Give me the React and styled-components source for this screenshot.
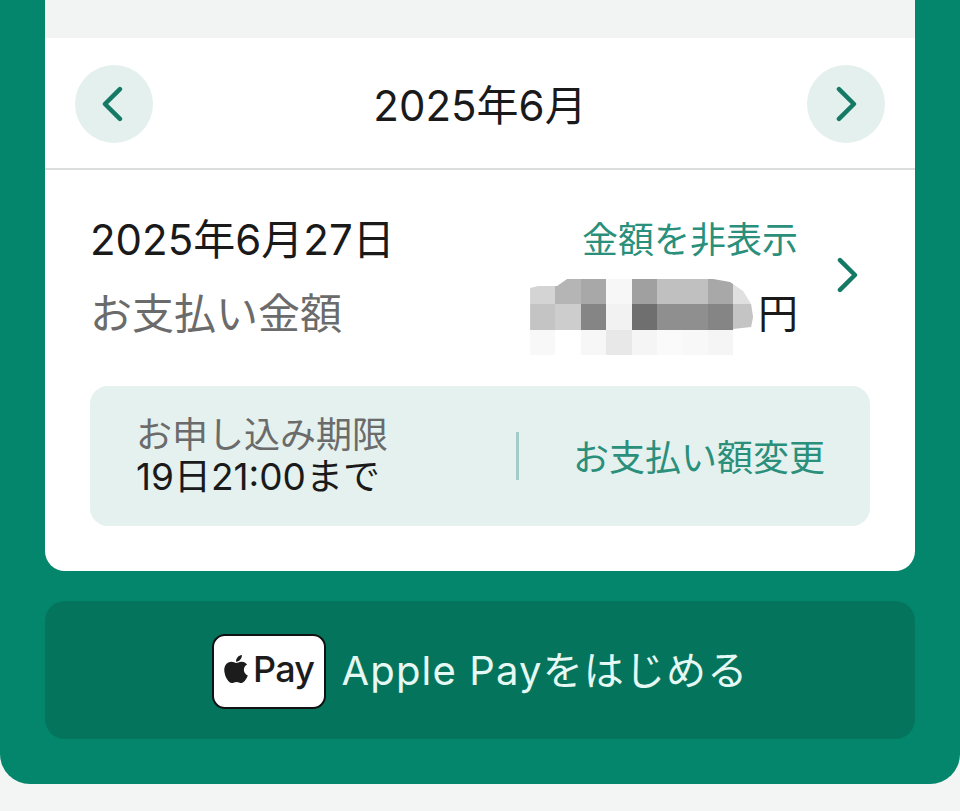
import React from 'react';
import styled, { createGlobalStyle } from 'styled-components';
import { FaApple } from 'react-icons/fa';

const GlobalStyle = createGlobalStyle`
  html, body {
    margin: 0;
    height: 811px;
    overflow: hidden;
    background: #f3f5f4;
  }
  body {
    font-family: "Inter", "Noto Sans CJK JP", sans-serif;
  }
`;

const Panel = styled.div`
  box-sizing: border-box;
  height: 784px;
  padding: 0 45px;
  display: flex;
  flex-direction: column;
  gap: 30px;
  background: #03866b;
  border-radius: 0 0 30px 30px;
`;

const Card = styled.div`
  height: 571px;
  display: flex;
  flex-direction: column;
  background: #fff;
  border-radius: 0 0 20px 20px;
  overflow: hidden;
`;

const TopStrip = styled.div`
  height: 38px;
  flex: none;
  background: #f1f4f3;
`;

const MonthBar = styled.div`
  box-sizing: border-box;
  height: 132px;
  flex: none;
  padding: 2px 30px 0;
  display: flex;
  align-items: center;
  justify-content: space-between;
  border-bottom: 2px solid #dcdddd;
`;

const MonthLabel = styled.div`
  margin-bottom: 4px;
  font-size: 42px;
  color: #1a1a1a;
`;

const RoundButton = styled.div`
  width: 78px;
  height: 78px;
  display: flex;
  align-items: center;
  justify-content: center;
  border-radius: 50%;
  background: #e4f0ee;
`;

const DetailRow = styled.div`
  padding: 44px 55px 0 45px;
  display: flex;
  align-items: center;
  gap: 36px;
`;

const DetailChevron = styled.div`
  display: flex;
  margin-bottom: 4px;
`;

const DetailBody = styled.div`
  flex: 1;
  display: grid;
  grid-template-columns: 1fr auto;
  row-gap: 22px;
`;

const DateText = styled.div`
  font-size: 42px;
  line-height: 52px;
  color: #1a1a1a;
`;

const HideLink = styled.div`
  font-size: 36px;
  line-height: 52px;
  text-align: right;
  color: #2a8f7b;
`;

const AmountLabel = styled.div`
  font-size: 42px;
  line-height: 52px;
  color: #6b6b6b;
`;

const AmountValue = styled.div`
  display: flex;
  align-items: center;
  font-size: 40px;
  line-height: 52px;
  color: #1a1a1a;
`;

const Mosaic = styled.div`
  width: 223px;
  height: 76px;
  margin: -9px 5px -15px 0;
  display: grid;
  grid-template-columns: repeat(8, 25.4px) 20px;
  grid-template-rows: repeat(3, 25.3px);
  clip-path: polygon(0 9px, 8px 7px, 27px 7px, 37px 0, 183px 0, 200px 3px, 213px 12px, 221px 25px, 223px 38px, 221px 48px, 203px 50px, 203px 76px, 0 76px);
`;

const MosaicCell = styled.div`
  background: ${(p) => p.$shade};
`;

const InfoBox = styled.div`
  box-sizing: border-box;
  height: 140px;
  margin: 46px 45px 0;
  padding: 0 45px 0 46px;
  display: flex;
  align-items: center;
  background: #e4f1ee;
  border-radius: 18px;
`;

const Deadline = styled.div`
  width: 380px;
  flex: none;
`;

const DeadlineLabel = styled.div`
  font-size: 36px;
  line-height: 42px;
  color: #6b6b6b;
`;

const DeadlineValue = styled.div`
  font-size: 37px;
  line-height: 42px;
  color: #1a1a1a;
`;

const Separator = styled.div`
  width: 3px;
  height: 48px;
  flex: none;
  background: #a3ccc8;
`;

const ChangeLink = styled.div`
  flex: 1;
  padding-bottom: 3px;
  font-size: 36px;
  text-align: right;
  color: #2a8f7b;
`;

const ApplePayButton = styled.div`
  height: 138px;
  flex: none;
  display: flex;
  align-items: center;
  justify-content: center;
  gap: 16px;
  background: #04755c;
  border-radius: 20px;
`;

const PayBadge = styled.div`
  box-sizing: border-box;
  width: 114px;
  height: 75px;
  margin-top: 2px;
  display: flex;
  align-items: center;
  justify-content: center;
  gap: 1px;
  padding: 0 3px 4px 0;
  background: #fff;
  border: 2px solid #111;
  border-radius: 13px;
  color: #1c1c1c;
  font-size: 36px;
  font-weight: 500;
  letter-spacing: -0.8px;
`;

const ApplePayText = styled.div`
  margin: 0 0 4px 0;
  font-size: 40px;
  letter-spacing: 1.15px;
  color: #e6f8f3;
`;

const MOSAIC_SHADES = [
  '#d4d4d4', '#b5b5b5', '#a8a8a8', '#f7f7f7', '#a0a0a0', '#c0c0c0', '#c0c0c0', '#a8a8a8', '#e0e0e0',
  '#c4c4c4', '#cdcdcd', '#858585', '#f2f2f2', '#6f6f6f', '#8f8f8f', '#8f8f8f', '#858585', '#c4c4c4',
  '#f8f8f8', '#ffffff', '#f7f7f7', '#e8e8e8', '#f5f5f5', '#fafafa', '#f8f8f8', '#f5f5f5', '#ffffff',
];

function Chevron({ left, size = 36 }) {
  return (
    <svg width={size * 0.72} height={size} viewBox="0 0 26 36" fill="none">
      <path
        d={left ? 'M19 3 L4 18 L19 33' : 'M6 3 L21 18 L6 33'}
        stroke="#147a65"
        strokeWidth="4.5"
        strokeLinecap="round"
        strokeLinejoin="round"
      />
    </svg>
  );
}

export default function App() {
  return (
    <>
      <GlobalStyle />
      <Panel>
        <Card>
          <TopStrip />
          <MonthBar>
            <RoundButton>
              <Chevron left />
            </RoundButton>
            <MonthLabel>2025年6月</MonthLabel>
            <RoundButton>
              <Chevron />
            </RoundButton>
          </MonthBar>
          <DetailRow>
            <DetailBody>
              <DateText>2025年6月27日</DateText>
              <HideLink>金額を非表示</HideLink>
              <AmountLabel>お支払い金額</AmountLabel>
              <AmountValue>
                <Mosaic>
                  {MOSAIC_SHADES.map((shade, i) => (
                    <MosaicCell key={i} $shade={shade} />
                  ))}
                </Mosaic>
                円
              </AmountValue>
            </DetailBody>
            <DetailChevron>
              <Chevron />
            </DetailChevron>
          </DetailRow>
          <InfoBox>
            <Deadline>
              <DeadlineLabel>お申し込み期限</DeadlineLabel>
              <DeadlineValue>19日21:00まで</DeadlineValue>
            </Deadline>
            <Separator />
            <ChangeLink>お支払い額変更</ChangeLink>
          </InfoBox>
        </Card>
        <ApplePayButton>
          <PayBadge>
            <FaApple size={32} />
            Pay
          </PayBadge>
          <ApplePayText>Apple Payをはじめる</ApplePayText>
        </ApplePayButton>
      </Panel>
    </>
  );
}
